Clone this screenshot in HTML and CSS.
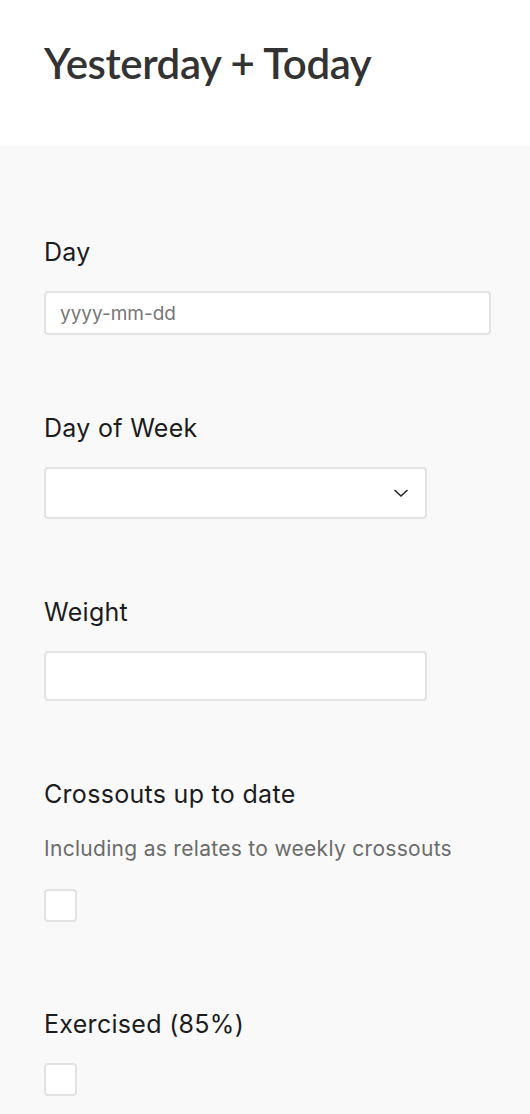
FILE: index.html
```html
<!DOCTYPE html>
<html lang="en">

<head>
  <meta charset="UTF-8" />
  <meta name="viewport" content="width=device-width, initial-scale=1.0" />
  <title>Yesterday + Today</title>
  <link rel="stylesheet" href="styles.css">
</head>

<body>

  <header class="page-head">
    <h1>Yesterday + Today</h1>
  </header>

  <main class="form-body">

    <div class="field">
      <label for="day">Day</label>
      <input type="text" id="day" class="input-date" placeholder="yyyy-mm-dd" />
    </div>

    <div class="field">
      <label for="dow">Day of Week</label>
      <div class="select-wrap">
        <select id="dow">
          <option value=""></option>
          <option>Monday</option>
          <option>Tuesday</option>
          <option>Wednesday</option>
          <option>Thursday</option>
          <option>Friday</option>
          <option>Saturday</option>
          <option>Sunday</option>
        </select>
        <svg class="chevron" width="16" height="10" viewBox="0 0 16 10">
          <path d="M1.5 2 L8 8 L14.5 2" fill="none" stroke="#222" stroke-width="1.5" />
        </svg>
      </div>
    </div>

    <div class="field">
      <label for="weight">Weight</label>
      <input type="text" id="weight" class="input-text" />
    </div>

    <div class="field field-check">
      <label for="crossouts">Crossouts up to date</label>
      <p class="help">Including as relates to weekly crossouts</p>
      <input type="checkbox" id="crossouts" />
    </div>

    <div class="field field-check">
      <label for="exercised">Exercised (85%)</label>
      <input type="checkbox" id="exercised" />
    </div>

  </main>

</body>

</html>
```

FILE: styles.css
```css
* {
    box-sizing: border-box;
}
html, body {
    margin: 0;
    padding: 0;
    width: 100%;
}
body {
    background: #f9f9f9;
    font-family: Inter, "Liberation Sans", sans-serif;
    color: #1c1c1e;
}
.page-head {
    margin: 0;
    padding: 0 44px;
    height: 146px;
    background: #fff;
}
.page-head h1 {
    margin: 0;
    padding: 38px 0 0;
    font-family: Lato, "Liberation Sans", sans-serif;
    font-size: 42px;
    font-weight: 600;
    line-height: 50px;
    letter-spacing: -0.4px;
    color: #333;
}
.form-body {
    padding: 90px 44px 0;
}
.field {
    margin: 0 0 77px;
}
.field label {
    display: block;
    margin: 0 0 23px;
    font-size: 25px;
    line-height: 32px;
    font-weight: 400;
    letter-spacing: 0.3px;
}
.field input[type=text],
.field select {
    display: block;
    margin: 0;
    font-family: inherit;
    background: #fff;
    border: 2px solid #e3e3e3;
    border-radius: 4px;
    outline: 0;
    -webkit-appearance: none;
    appearance: none;
}
.input-date {
    width: 447px;
    height: 44px;
    padding: 0 14px;
    font-size: 19px;
    color: #333;
}
.input-date::placeholder {
    color: #777;
}
.input-text {
    width: 383px;
    height: 50px;
    padding: 0 14px;
    font-size: 19px;
}
.select-wrap {
    position: relative;
    width: 383px;
}
.select-wrap select {
    width: 100%;
    height: 52px;
    padding: 0 14px;
    font-size: 19px;
    color: #1c1c1e;
}
.chevron {
    position: absolute;
    top: 21px;
    right: 18px;
    pointer-events: none;
}
.help {
    margin: 0 0 26px;
    padding: 2px 0 0;
    font-size: 21px;
    line-height: 28px;
    letter-spacing: 0.3px;
    color: #6b6b6b;
}
.field.field-check {
    margin-bottom: 86px;
}
.field-check input[type=checkbox] {
    display: block;
    margin: 0;
    width: 33px;
    height: 33px;
    background: #fff;
    border: 2px solid #e3e3e3;
    border-radius: 4px;
    -webkit-appearance: none;
    appearance: none;
}
```
